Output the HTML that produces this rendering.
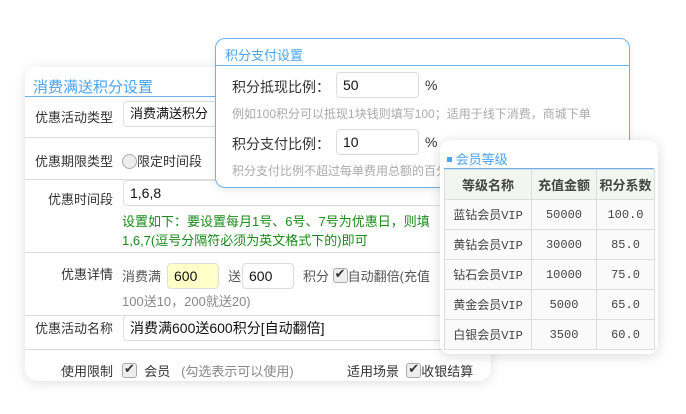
<!DOCTYPE html>
<html><head><meta charset="utf-8"><style>
*{box-sizing:border-box;margin:0;padding:0}
body{width:686px;height:414px;background:#fff;position:relative;overflow:hidden;font-family:"Liberation Sans","Noto Sans CJK SC",sans-serif;font-size:13px;color:#333}
.abs{position:absolute}
.main{left:25px;top:67px;width:466px;height:314px;background:#fff;border-radius:12px;box-shadow:0 2px 12px rgba(0,0,0,.12);overflow:hidden}
.ttl{color:#4aa3f5;font-size:15px}
.line{height:1px;background:#ddd;position:absolute;left:0;right:0}
.lbl{position:absolute;width:88px;text-align:right;font-size:13px;color:#333}
.inp{position:absolute;border:1px solid #ddd;border-radius:4px;background:#fff;font-size:14px;color:#111;padding-left:6px}
.cb{display:inline-block;width:15px;height:15px;border:1px solid #aaa;border-radius:3px;background:#eee;vertical-align:-2px;position:relative}
.cb:after{content:"✔";position:absolute;left:1px;top:-3px;font-size:13px;color:#333}
.pay{left:215px;top:38px;width:415px;height:150px;background:#fff;border:1px solid #6bb3f0;border-radius:10px;box-shadow:0 2px 8px rgba(0,0,0,.08)}
.mem{left:440px;top:140px;width:218px;height:214px;background:#fff;border-radius:10px;box-shadow:0 2px 12px rgba(0,0,0,.15)}
table{border-collapse:collapse;position:absolute;left:4px;top:29px;font-family:"Liberation Mono","Noto Sans CJK SC",monospace;font-size:12px}
td,th{border:1px solid #ddd;text-align:center;height:30px;color:#444;font-weight:normal}
th{background:#f1f6f1;font-weight:bold;font-family:"Liberation Sans","Noto Sans CJK SC",sans-serif;font-size:13px;color:#444}
td{background:#fafafa}
</style></head><body>
<div class="abs main">
 <div class="abs ttl" style="left:8px;top:9px">消费满送积分设置</div>
 <div class="line" style="top:29px;background:#6bb3f0"></div>
 <div class="lbl" style="left:0;top:40px">优惠活动类型</div>
 <div class="inp" style="left:98px;top:34px;width:120px;height:26px;line-height:24px;font-size:13px">消费满送积分</div>
 <div class="line" style="top:70px"></div>
 <div class="lbl" style="left:0;top:84px">优惠期限类型</div>
 <div class="abs" style="left:97px;top:84px;font-size:13px"><span style="display:inline-block;width:15px;height:15px;border:1px solid #aaa;border-radius:50%;background:#eee;vertical-align:-3px"></span>限定时间段</div>
 <div class="line" style="top:112px"></div>
 <div class="lbl" style="left:0;top:122px">优惠时间段</div>
 <div class="inp" style="left:98px;top:113px;width:380px;height:26px;line-height:24px;border-right:none">1,6,8</div>
 <div class="abs" style="left:97px;top:145px;color:#1a8a1a;font-size:13px;white-space:nowrap;line-height:19px">设置如下：要设置每月1号、6号、7号为优惠日，则填<br>1,6,7(逗号分隔符必须为英文格式下的)即可</div>
 <div class="line" style="top:185px"></div>
 <div class="lbl" style="left:0;top:197px">优惠详情</div>
 <div class="abs" style="left:97px;top:199px;color:#555;white-space:nowrap">消费满</div>
 <div class="inp" style="left:142px;top:196px;width:52px;height:26px;line-height:24px;background:#ffffc8">600</div>
 <div class="abs" style="left:203px;top:199px;color:#555">送</div>
 <div class="inp" style="left:217px;top:196px;width:52px;height:26px;line-height:24px">600</div>
 <div class="abs" style="left:278px;top:199px;color:#555;white-space:nowrap">积分 <span class="cb"></span>自动翻倍(充值</div>
 <div class="abs" style="left:97px;top:224px;color:#888;white-space:nowrap">100送10，200就送20)</div>
 <div class="line" style="top:248px"></div>
 <div class="lbl" style="left:0;top:251px">优惠活动名称</div>
 <div class="inp" style="left:98px;top:248px;width:380px;height:26px;line-height:24px;border-right:none">消费满600送600积分[自动翻倍]</div>
 <div class="line" style="top:282px"></div>
 <div class="lbl" style="left:0;top:294px">使用限制</div>
 <div class="abs" style="left:97px;top:294px;white-space:nowrap"><span class="cb"></span>&nbsp; 会员 &nbsp; <span style="color:#888">(勾选表示可以使用)</span></div>
 <div class="abs" style="left:322px;top:294px;white-space:nowrap">适用场景 &nbsp;<span class="cb"></span>收银结算</div>
</div>
<div class="abs pay">
 <div class="abs ttl" style="left:9px;top:6px;font-size:13px">积分支付设置</div>
 <div class="line" style="top:26px;background:#6bb3f0"></div>
 <div class="abs" style="left:16px;top:38px;font-size:14px">积分抵现比例：</div>
 <div class="inp" style="left:120px;top:33px;width:83px;height:26px;line-height:24px">50</div>
 <div class="abs" style="left:209px;top:38px;font-size:14px">%</div>
 <div class="abs" style="left:16px;top:66px;color:#aaa;font-size:12px;white-space:nowrap">例如100积分可以抵现1块钱则填写100；适用于线下消费，商城下单</div>
 <div class="abs" style="left:16px;top:95px;font-size:14px">积分支付比例：</div>
 <div class="inp" style="left:120px;top:90px;width:83px;height:26px;line-height:24px">10</div>
 <div class="abs" style="left:209px;top:95px;font-size:14px">%</div>
 <div class="abs" style="left:16px;top:123px;color:#aaa;font-size:12px;white-space:nowrap">积分支付比例不超过每单费用总额的百分</div>
</div>
<div class="abs mem">
 <div class="abs" style="left:7px;top:9px;color:#4aa3f5;font-size:13px"><span style="display:inline-block;width:5px;height:5px;background:#4aa3f5;vertical-align:2px"></span> 会员等级</div>
 <div class="abs" style="left:4px;right:4px;top:28px;height:1px;background:#6bb3f0"></div>
 <table>
 <tr><th style="width:87px">等级名称</th><th style="width:65px">充值金额</th><th style="width:58px">积分系数</th></tr>
 <tr><td>蓝钻会员VIP</td><td>50000</td><td>100.0</td></tr>
 <tr><td>黄钻会员VIP</td><td>30000</td><td>85.0</td></tr>
 <tr><td>钻石会员VIP</td><td>10000</td><td>75.0</td></tr>
 <tr><td>黄金会员VIP</td><td>5000</td><td>65.0</td></tr>
 <tr><td>白银会员VIP</td><td>3500</td><td>60.0</td></tr>
 </table>
</div>
</body></html>
